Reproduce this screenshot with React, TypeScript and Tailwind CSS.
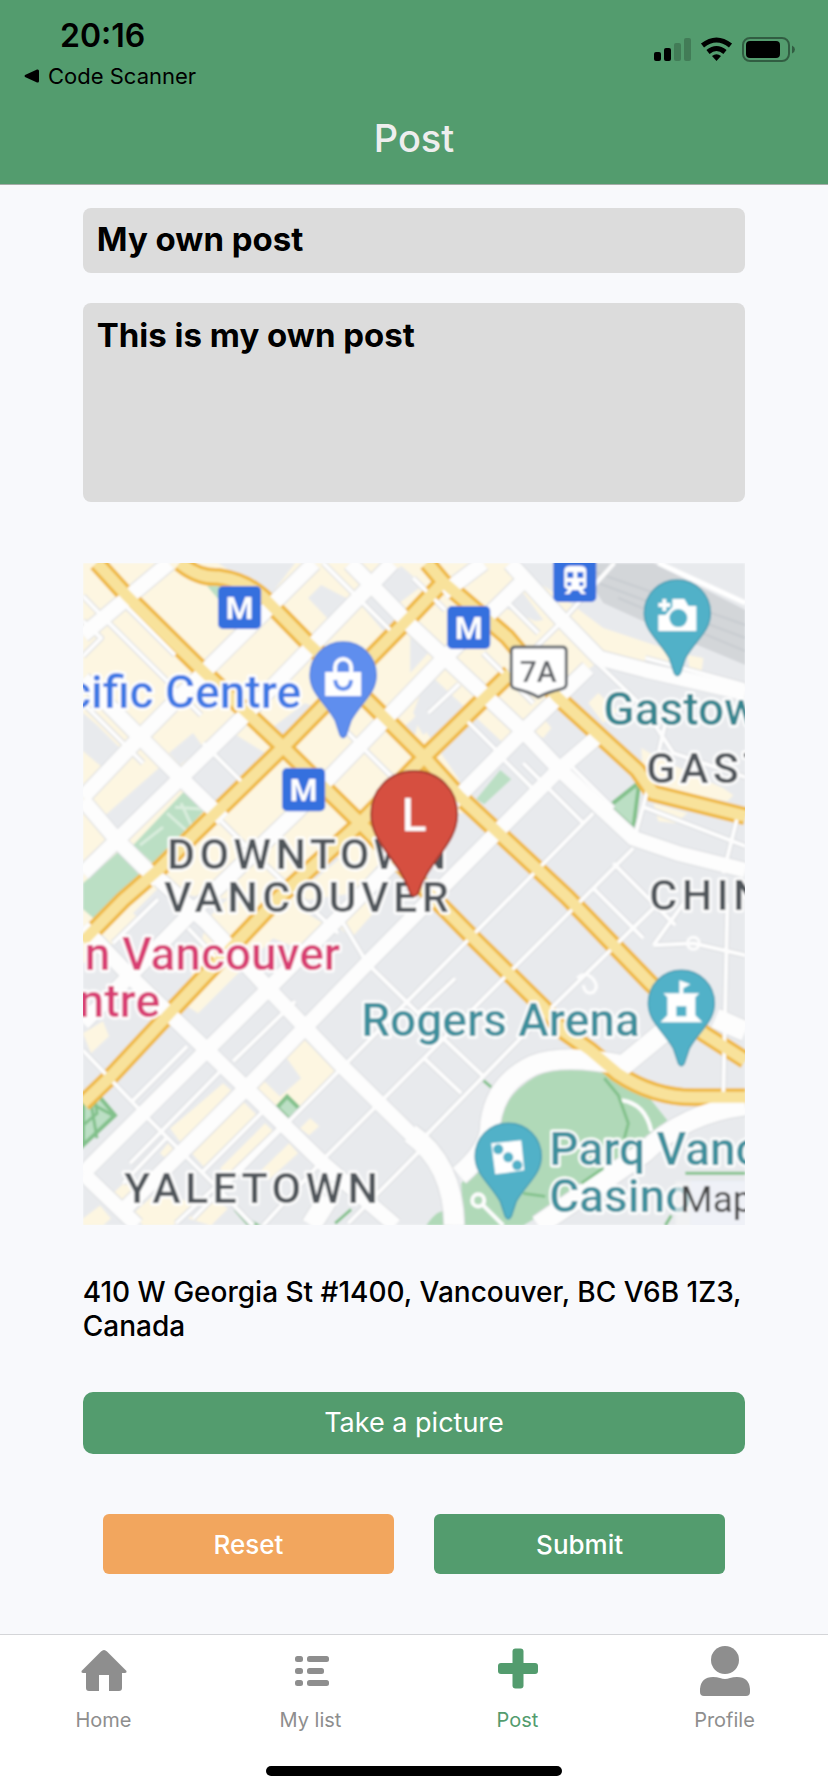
import type { ReactNode } from "react";

const MINOR_ROADS = [
  "M0 33 L20 54 L118 152",
  "M0 58 L18 75 L0 93",
  "M40 40 L92 92",
  "M0 140 L60 200",
  "M531 0 L477 60 L420 116",
  "M384 158 L420 194 L350 264",
  "M417 193 L458 234",
  "M480 195 L530 245",
  "M510 250 L194 570 L110 655",
  "M550 285 L244 592 L180 662",
  "M570 345 L440 472 L337 578",
  "M337 587 L265 660",
  "M440 200 L500 260",
  "M530 300 L592 362",
  "M510 325 L560 375",
  "M604 335 L570 382",
  "M570 382 L610 380 L662 392",
  "M644 340 L640 530",
  "M552 272 L570 205",
  "M558 243 L662 283",
  "M640 310 L655 250",
  "M340 494 L378 530",
  "M360 475 L400 513",
  "M254 350 L284 400 L335 450 L372 415",
  "M220 467 L300 388",
  "M255 370 L170 290 L130 250",
  "M164 524 L232 455",
  "M150 498 L212 438",
  "M134 625 L196 565",
  "M118 610 L180 548",
  "M50 537 L104 483",
  "M47 600 L140 505",
  "M0 487 L60 550 L130 620 L170 662",
  "M84 574 L40 620",
  "M93 660 L136 620",
  "M105 365 L142 404",
  "M30 380 L75 336",
  "M420 35 L455 70",
  "M330 15 L362 47",
  "M345 150 L376 121",
  "M240 0 L310 70",
  "M230 80 L270 42",
  "M310 215 L260 165",
  "M400 90 L450 140",
  "M514 100 L560 144 L590 190 L662 214",
  "M575 190 L582 160",
  "M562 95 L662 122",
  "M120 180 L165 225",
];

const MAJOR_ROADS = [
  "M86 0 L0 72",
  "M231 0 L130 100 L57 174 L0 234",
  "M309 0 L167 147 L34 277 L0 310",
  "M446 12 L360 96 L214 248 L104 354 L0 460",
  "M505 105 L440 168 L187 424 L60 550 L0 610",
  "M400 0 L360 30",
  "M516 172 L474 208 L284 400 L164 524 L37 650",
  "M0 116 L57 174 L97 214 L140 256",
  "M0 237 L34 277 L75 318",
  "M110 345 L184 424 L260 504 L337 580",
  "M75 315 L122 358",
  "M0 364 L50 416 L124 487 L240 600 L312 662",
  "M0 610 L54 662",
  "M267 0 L327 62 L440 168 L477 207 L550 275 L594 290 L662 307",
  "M427 0 L477 55 L516 95 L562 107 L662 130",
];

const WIDE_ROADS = [
  "M327 570 Q370 600 371 662",
  "M376 612 Q408 585 407 560 Q412 520 450 502 Q480 490 540 502 L585 465",
  "M455 662 L560 590 Q600 550 662 542",
  "M632 455 L662 468",
  "M228 662 L245 635",
];

const YELLOW_ROADS = [
  "M14 0 L44 33 L120 108 L200 184 L277 260 L390 375 L460 444 L480 468 L507 487 L534 510 Q570 534 610 534 L662 534",
  "M97 0 Q115 15 135 14 Q165 18 184 38 L227 82 L287 140 L340 193 L377 234 L484 334 L567 420 L620 470 L662 497",
  "M344 0 L360 19 L424 74 L474 134 L554 207 L570 230 L662 253",
  "M360 19 L327 54 L200 184 L110 272 L77 305 L40 337 L0 378",
  "M427 110 L340 195 L277 260 L194 336 L94 442 L27 514 L0 540",
];

const GREY_BLOCKS = [
  "M135 0 H212 L186 34 Q160 12 150 10Z",
  "M225 35 L238 22 L265 36 L245 56Z",
  "M298 20 L318 3 L340 22 L316 40Z",
  "M278 42 L290 33 L322 60 L307 76Z",
  "M20 254 L77 204 L87 214 L35 266Z",
  "M86 190 L110 170 L120 184 L97 202Z",
  "M102 217 L150 170 L190 195 L130 248Z",
  "M190 164 L222 140 L236 146 L200 182Z",
  "M0 150 L14 162 L38 186 L20 205 L0 188Z",
  "M327 74 L345 90 L327 110Z",
  "M330 155 L350 140 L365 152 L340 172Z",
  "M422 45 L440 30 L460 57 L452 58Z",
  "M318 166 L337 150 L330 180Z",
  "M50 350 L75 325 L85 335 L62 360Z",
  "M216 305 L240 282 L256 296 L232 316Z",
];

const BEIGE_BLOCKS = [
  "M125 355 L186 295 L215 345 L240 360 L215 385 L190 375 L160 405 L115 450 L100 440Z",
  "M257 365 L285 335 L290 350 L268 375Z",
  "M0 470 L20 458 L26 473 L8 490Z",
  "M200 490 L220 475 L254 510 L208 555 L195 535 L218 515Z",
  "M171 520 L178 515 L205 541 L196 553Z",
  "M87 565 L105 550 L140 520 L148 527 L98 580Z",
  "M107 588 L157 535 L174 552 L122 605Z",
  "M137 605 L182 560 L194 572 L148 618Z",
  "M30 630 L44 617 L58 636 L40 645Z",
  "M0 655 L17 642 L28 655 L20 662 H0Z",
  "M175 610 L206 580 L215 590 L185 617Z",
  "M217 565 L227 555 L236 563 L226 572Z",
  "M77 590 L85 580 L92 588 L84 596Z",
  "M50 650 L75 628 L110 640 L90 662 H60Z",
  "M105 655 L128 635 L145 645 L128 662Z",
  "M558 185 L575 195 L640 225 L650 232 L644 238 L560 222Z",
  "M570 240 L604 250 L592 260 L575 258Z",
  "M455 20 L480 35 L520 65 L580 85 L600 100 L590 112 L520 95 L490 65Z",
  "M505 140 L515 130 L534 148 L520 160Z",
  "M450 170 L460 155 L468 165 L460 175Z",
  "M604 92 L620 95 L618 110 L606 106Z",
];

function LocationMap() {
  return (
    <svg
      viewBox="0 0 662 662"
      role="img"
      aria-label="Map of Downtown Vancouver"
      className="block w-full font-[Roboto,sans-serif]"
    >
      <defs>
        <clipPath id="map-bounds">
          <rect width="662" height="662" />
        </clipPath>
        <filter id="map-soften" x="0" y="0" width="1" height="1">
          <feGaussianBlur stdDeviation="0.8" />
        </filter>
      </defs>
      <g clipPath="url(#map-bounds)" filter="url(#map-soften)">
        <rect width="662" height="662" fill="#e8eaed" />
        <path
          d="M0 0 H430 L520 95 L487 120 L455 165 L420 180 L345 110 L330 150 L375 215 L385 250 L340 250 L270 330 L200 340 L80 330 L30 380 L0 400Z"
          fill="#fdf6e1"
        />
        <g fill="#e8eaed">
          {GREY_BLOCKS.map((d) => (
            <path key={d} d={d} />
          ))}
        </g>
        <g fill="#fdf6e1">
          {BEIGE_BLOCKS.map((d) => (
            <path key={d} d={d} />
          ))}
        </g>
        <path d="M495 0 H570 L662 47 V102 L590 72 L520 40Z" fill="#d3d6d9" />
        <path d="M500 5 L662 62 M515 20 L662 75 M535 35 L662 88" stroke="#c8ccd0" strokeWidth="2" />
        <path d="M575 0 L662 40" stroke="#fff" strokeWidth="5" />

        <g fill="#bbdfc4">
          <path d="M50 282 L104 225 L124 244 L72 302Z" />
          <path d="M0 320 L36 288 L60 316 L14 358 L0 346Z" />
          <path d="M124 23 L140 23 L140 42Z" />
          <path d="M393 236 L417 207 L428 216 L401 241Z" />
        </g>
        <path d="M57 282 L80 264 M84 250 L104 268 M92 244 L122 246 M112 270 L98 240" stroke="#d9eddd" strokeWidth="3" />
        <g fill="#b0d9b8">
          <path d="M410 560 Q440 505 485 505 L530 508 L560 527 L584 557 L527 610 L440 662 H380 L378 620 L404 594Z" />
          <path d="M343 662 Q360 638 367 655 V662Z" />
        </g>
        <g fill="#bbdfc4" stroke="#82c18b" strokeWidth="4">
          <path d="M526 243 L556 219 L550 265Z" />
          <path d="M194 544 L204 533 L217 546 L206 556Z" />
          <path d="M0 530 L12 528 L32 552 L0 582Z" />
        </g>
        <path d="M552 216 L562 222 L554 230Z M150 646 L166 655 L178 662 H164Z" fill="#82c18b" />
        <g fill="none" stroke="#82c18b" strokeWidth="3">
          <path d="M10 522 L14 550 L0 562 M30 552 L8 540 L14 575" />
          <path d="M400 517 L413 528" />
          <path d="M252 660 L268 646" />
        </g>

        <g fill="none" stroke="#d9dbde" strokeLinejoin="round">
          <path d={MINOR_ROADS.join(" ")} strokeWidth="6" />
          <path d={MAJOR_ROADS.join(" ")} strokeWidth="17" />
          <path d={WIDE_ROADS.join(" ")} strokeWidth="22" />
        </g>
        <path d={YELLOW_ROADS.join(" ")} fill="none" stroke="#efb944" strokeWidth="18" />
        <g fill="none" stroke="#fdfdfd" strokeLinejoin="round">
          <path d={MINOR_ROADS.join(" ")} strokeWidth="4" />
          <path d={MAJOR_ROADS.join(" ")} strokeWidth="15" />
          <path d={WIDE_ROADS.join(" ")} strokeWidth="20" />
          <path d="M538 537 Q562 540 568 568" strokeWidth="4" />
          <path d="M398 640 L420 662" strokeWidth="4" />
          <circle cx="395" cy="637" r="6" strokeWidth="4" />
          <circle cx="610" cy="380" r="6" strokeWidth="3" />
          <path d="M494 415 Q502 407 510 416 Q516 424 510 429 Q502 432 500 422" strokeWidth="3" />
        </g>
        <path d={YELLOW_ROADS.join(" ")} fill="none" stroke="#f8e29b" strokeWidth="11" />
        <g fill="none" stroke="#82c18b" strokeWidth="3">
          <path d="M521 515 L535 532 L545 560 L541 575" />
          <path d="M440 630 L462 633 M498 620 L520 605" />
          <path d="M602 610 H662 M582 662 L588 652" />
        </g>
        <path d="M607 618 H662 V662 H607Z" fill="#dfe8fa" />

        <g strokeWidth="5" stroke="#fff" strokeLinejoin="round" fontWeight="500" className="[paint-order:stroke]">
          <g fontSize="46">
            <text x="218" y="145" textAnchor="end" fill="#3d78e4">cific Centre</text>
            <text x="520" y="162" fill="#35858f">Gastow</text>
            <text x="257" y="407" textAnchor="end" fill="#d83c72">n Vancouver</text>
            <text x="77" y="454" textAnchor="end" fill="#d83c72">ntre</text>
            <text x="278" y="473" fill="#3e8f9c">Rogers Arena</text>
            <text x="466" y="602" fill="#3e8f9c">Parq Vanc</text>
            <text x="466" y="649" fill="#3e8f9c">Casino</text>
          </g>
          <g fontSize="43" fill="#50555a" className="tracking-widest">
            <text x="84" y="306">DOWNTOWN</text>
            <text x="81" y="349">VANCOUVER</text>
            <text x="41" y="640">YALETOWN</text>
            <text x="563" y="220">GAST</text>
            <text x="566" y="347">CHIN</text>
          </g>
        </g>
        <rect x="592" y="618" width="70" height="44" fill="#f5f5f5" opacity="0.7" />
        <text x="597" y="649" fontSize="37" fill="#444">Map</text>

        <g fontSize="32" fontWeight="700" textAnchor="middle">
          {[
            [135, 23],
            [199, 205],
            [364, 43],
          ].map(([x, y]) => (
            <g key={x}>
              <rect x={x} y={y} width="43" height="43" rx="5" fill="#3570de" />
              <text x={x + 21.5} y={y + 33} fill="#fff">M</text>
            </g>
          ))}
        </g>
        <rect x="470" y="-5" width="43" height="44" rx="5" fill="#3570de" />
        <path
          d="M481 8 Q481 3 487 3 H497 Q503 3 503 8 V24 L499 27 L503 31 H498 L495 27 H489 L486 31 H481 L485 27 L481 24Z"
          fill="#fff"
        />
        <path d="M484 9h6v6h-6z M494 9h6v6h-6z M484 19h4v4h-4z M496 19h4v4h-4z" fill="#3570de" />

        <path
          d="M432 84 H479 Q483 84 483 88 V121 Q483 125 478 126 Q465 129 455 134 Q446 129 433 126 Q428 125 428 121 V88 Q428 84 432 84Z"
          fill="#fff"
          stroke="#666b70"
          strokeWidth="3"
        />
        <text x="455" y="119" fontSize="30" fontWeight="500" textAnchor="middle" fill="#606468">7A</text>

        <g transform="translate(260 112)">
          <PinShape fill="#5f8eee" stroke="#5583de" />
          <path d="M-18 -3 H18 V21 H-18Z" fill="#fff" />
          <path d="M-8 -3 V-8 A8 8 0 0 1 8 -8 V-3" fill="none" stroke="#fff" strokeWidth="4" />
          <path d="M-8 5 Q-7 14 0 14 Q7 14 8 5" fill="none" stroke="#5f8eee" strokeWidth="4" />
        </g>
        <g transform="translate(594 50)">
          <PinShape fill="#51b1c8" stroke="#469eb3" />
          <path d="M-19 2 H-12 L-5 -6 V-14 H7 L11 -7 H19 V18 H-19Z" fill="#fff" />
          <path d="M-13 -14 V-2 M-19 -8 H-7" stroke="#fff" strokeWidth="4" />
          <circle cx="1" cy="5" r="9" fill="#51b1c8" />
        </g>
        <g transform="translate(598 440)">
          <PinShape fill="#51b1c8" stroke="#469eb3" />
          <path d="M-18 -10 H-2 V-23 L9 -19 L2 -15 V-10 H18 L14 -6 V12 L21 19 H-21 L-14 12 V-6Z" fill="#fff" />
          <path d="M-5 3h10v10h-10z" fill="#51b1c8" />
        </g>
        <g transform="translate(425 593)">
          <PinShape fill="#51b1c8" stroke="#469eb3" />
          <path d="M-17 -13 L13 -16 L16 14 L-13 18Z" fill="#fff" />
          <g fill="#51b1c8">
            <circle cx="-10" cy="-7" r="5" />
            <circle cx="0" cy="1" r="5" />
            <circle cx="9" cy="9" r="5" />
          </g>
        </g>
        <path
          d="M331 208 C356 208 374 227 374 251 C374 281 346 296 335 330 Q331 336 327 330 C316 296 288 281 288 251 C288 227 306 208 331 208Z"
          fill="#d64f3f"
          stroke="#a43a2f"
          strokeWidth="2"
        />
        <text x="331" y="268" fontSize="46" textAnchor="middle" fontWeight="500" fill="#fff">L</text>
      </g>
    </svg>
  );
}

function PinShape({ fill, stroke }: { fill: string; stroke: string }) {
  return (
    <path
      d="M0 -33 C19 -33 33 -18 33 0 C33 18 19 26 8 45 L3 60 Q0 65 -3 60 L-8 45 C-19 26 -33 18 -33 0 C-33 -18 -19 -33 0 -33Z"
      fill={fill}
      stroke={stroke}
      strokeWidth="1.5"
    />
  );
}

function StatusIcons() {
  return (
    <svg width="142" height="28" viewBox="0 0 142 28" aria-hidden="true">
      <rect x="0" y="15" width="7" height="9" rx="2" />
      <rect x="10" y="11" width="7" height="13" rx="2" />
      <g opacity="0.2">
        <rect x="20" y="6" width="7" height="18" rx="2" />
        <rect x="30" y="1" width="7" height="23" rx="2" />
      </g>
      <g fill="none" stroke="#000" strokeWidth="5">
        <path d="M48.5 8.5 Q62.500 -2.500 76.500 8.5" />
        <path d="M54 15 Q62.500 8 71 15" />
      </g>
      <path d="M58 19 Q62.500 15.500 67 19 L62.500 24Z" />
      <rect x="89" y="1" width="46" height="23" rx="7" fill="none" stroke="#000" strokeWidth="2" opacity="0.4" />
      <rect x="92" y="4" width="34" height="17" rx="4" />
      <path d="M138 8.500 Q141 10 141 12.500 Q141 15 138 16.500Z" opacity="0.4" />
    </svg>
  );
}

function Tab({ label, active = false, children }: { label: string; active?: boolean; children: ReactNode }) {
  return (
    <a
      href="#"
      aria-current={active ? "page" : undefined}
      className={`flex flex-1 flex-col items-center gap-1 pt-[9px] text-xl leading-6 ${active ? "text-[#539c6e]" : "text-[#8e8e8e]"}`}
    >
      <svg width="60" height="60" viewBox="0 0 60 60" fill="currentColor" aria-hidden="true">
        {children}
      </svg>
      {label}
    </a>
  );
}

export default function App() {
  return (
    <div className="flex min-h-screen flex-col bg-[#f8f9fc] font-[Inter,sans-serif] text-black">
      <header className="h-[185px] border-b border-[#a5aca8] bg-[#539c6e]">
        <div className="flex items-start justify-between pr-8 pl-6">
          <div>
            <div className="pt-4 pl-9 text-[32px] leading-10 font-semibold">20:16</div>
            <a href="#" className="flex items-center gap-2 text-[22px] leading-10">
              <svg width="16" height="14" viewBox="0 0 16 14" aria-hidden="true">
                <path d="M1 6 L13 0.500 Q15 0 15 2 V12 Q15 14 13 13.500 L1 8 Q0 7 1 6Z" />
              </svg>
              Code Scanner
            </a>
          </div>
          <div className="pt-[37px]">
            <StatusIcons />
          </div>
        </div>
        <h1 className="pt-[18px] text-center text-[38px] leading-12 font-medium text-[#eeeeee]">Post</h1>
      </header>

      <main className="mx-auto w-4/5 grow pt-[23px]">
        <form onSubmit={(event) => event.preventDefault()}>
          <input
            aria-label="Title"
            defaultValue="My own post"
            className="block h-[65px] w-full rounded-lg bg-[#dcdcdc] px-3.5 pb-1 text-[33px] font-bold outline-none"
          />
          <textarea
            aria-label="Description"
            defaultValue="This is my own post"
            className="mt-[30px] block h-[199px] w-full resize-none rounded-lg bg-[#dcdcdc] px-3.5 py-3 text-[33px] leading-10 font-bold outline-none"
          />
          <div className="mt-[61px]">
            <LocationMap />
          </div>
          <p className="mt-[50px] text-[28px] leading-[34px] font-medium">
            410 W Georgia St #1400, Vancouver, BC V6B 1Z3, Canada
          </p>
          <button type="button" className="mt-[49px] block h-[62px] w-full rounded-[10px] bg-[#539c6e] text-[27px] text-white">
            Take a picture
          </button>
          <div className="mt-[60px] flex gap-10 px-5 text-[26px] font-medium text-white">
            <button type="reset" className="h-[60px] flex-1 rounded-md bg-[#f2a65e]">
              Reset
            </button>
            <button type="submit" className="h-[60px] flex-1 rounded-md bg-[#539c6e]">
              Submit
            </button>
          </div>
        </form>
      </main>

      <footer className="mt-[60px] h-[158px] border-t border-[#d4d5d8] bg-white">
        <nav className="flex">
          <Tab label="Home">
            <path d="M30 6 Q31.500 6 33 7.500 L52.500 27 Q53 29 51 29 H48 V44 Q48 47 45 47 H35 V31 H25 V47 H15 Q12 47 12 44 V29 H9 Q7 29 7.500 27 L27 7.500 Q28.500 6 30 6Z" />
          </Tab>
          <Tab label="My list">
            <rect x="14" y="12" width="8" height="6" rx="2.500" />
            <rect x="26" y="12" width="22" height="6" rx="2.500" />
            <rect x="14" y="24" width="8" height="6" rx="2.500" />
            <rect x="26" y="24" width="17" height="6" rx="2.500" />
            <rect x="14" y="36" width="8" height="6" rx="2.500" />
            <rect x="26" y="36" width="22" height="6" rx="2.500" />
          </Tab>
          <Tab label="Post" active>
            <rect x="24.500" y="4.500" width="11" height="40" rx="3" />
            <rect x="10" y="19" width="40" height="11" rx="3" />
          </Tab>
          <Tab label="Profile">
            <circle cx="30" cy="16" r="14" />
            <path d="M18 33 Q22 33 25 34 Q30 36 35 34 Q38 33 42 33 Q54 33 55 45 V48 Q55 52 51 52 H9 Q5 52 5 48 V45 Q6 33 18 33Z" />
          </Tab>
        </nav>
        <div className="mx-auto mt-[34px] h-2.5 w-[296px] rounded-full bg-black" />
      </footer>
    </div>
  );
}
